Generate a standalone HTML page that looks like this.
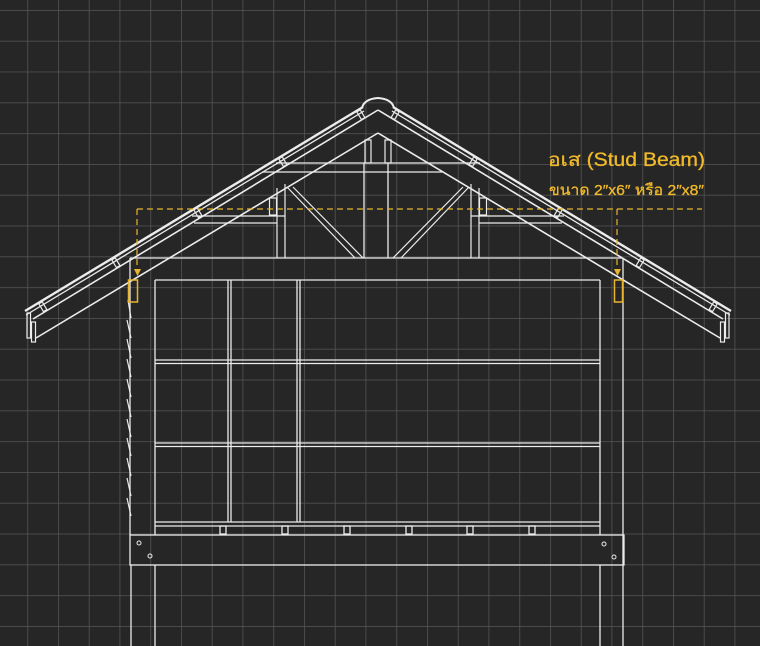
<!DOCTYPE html>
<html><head><meta charset="utf-8"><style>
html,body{margin:0;padding:0;background:#262626;}
svg{display:block}
</style></head><body>
<svg width="760" height="646" viewBox="0 0 760 646" xmlns="http://www.w3.org/2000/svg">
<defs>
<pattern id="g" x="27.3" y="10" width="30.75" height="30.8" patternUnits="userSpaceOnUse">
<path d="M0 0V30.8M0 0H30.75" stroke="#565656" stroke-width="1.5" fill="none"/>
</pattern>
<g id="half" fill="none" stroke="#ececec">
<path d="M25 311 L363 107" stroke-width="2.4"/>
<path d="M26 315 L364 111" stroke-width="1.3"/>
<path d="M33 319 L378 110" stroke-width="1.6"/>
<path d="M36 338 L378 133" stroke-width="1.6"/>
<rect x="27" y="313" width="3.5" height="25" stroke-width="1.2"/>
<rect x="31.5" y="322" width="4" height="20" stroke-width="1.2"/>
<g stroke-width="1.2">
<rect x="-2" y="1" width="4" height="9" transform="translate(40,302) rotate(-31)"/>
<rect x="-2" y="1" width="4" height="9" transform="translate(113,258) rotate(-31)"/>
<rect x="-2" y="1" width="4" height="9" transform="translate(195,208) rotate(-31)"/>
<rect x="-2" y="1" width="4" height="9" transform="translate(280,157) rotate(-31)"/>
<rect x="-2" y="1" width="4" height="9" transform="translate(358,110) rotate(-31)"/>
</g>
<g stroke-width="1.2">
<path d="M277 188V258M285 184V258"/>
<rect x="269.5" y="198" width="7" height="17"/>
<path d="M192 216H285M194 223H277"/>
<path d="M287 187L355 258M293 187L363 258"/>
<rect x="365" y="140" width="6" height="23"/>
</g>
</g>
</defs>
<rect width="760" height="646" fill="#262626"/>
<rect width="760" height="646" fill="url(#g)"/>

<use href="#half"/>
<use href="#half" transform="translate(756,0) scale(-1,1)"/>

<g fill="none" stroke="#ececec" stroke-width="1.3">
<path d="M362 108 Q364 99 378 98 Q392 99 394 108" stroke-width="2"/>
<path d="M276 163H480M262 172H442"/>
<path d="M364 163V258M388 163V258"/>
<path d="M130 258H623"/>
<path d="M155 280H600"/>
<path d="M130 258V535M155 280V535M600 280V535M623 258V646"/>
<path d="M131 565V646M155 565V646M600 565V646"/>
<path d="M128 300L131 318M127 320L131 338M127 339L131 358M127 359L131 377M127 379L131 397M127 399L131 417M127 419L131 437M127 438L131 456M127 458L131 476M127 478L131 496M127 498L131 516" stroke-width="1.2"/>
<path d="M228 280V522M231 280V522M297 280V522M300 280V522"/>
<path d="M155 360H600M155 363.5H600M155 443H600M155 446.5H600M155 522H600M155 526H600"/>
<rect x="220" y="526" width="6" height="8"/><rect x="282" y="526" width="6" height="8"/><rect x="344" y="526" width="6" height="8"/><rect x="406" y="526" width="6" height="8"/><rect x="467" y="526" width="6" height="8"/><rect x="529" y="526" width="6" height="8"/>
<rect x="130" y="535" width="494" height="30"/>
<circle cx="139" cy="543" r="2" stroke-width="1"/><circle cx="150" cy="556" r="2" stroke-width="1"/>
<circle cx="604" cy="544" r="2" stroke-width="1"/><circle cx="614" cy="557" r="2" stroke-width="1"/>
</g>

<g stroke="#e9b52e" fill="none" stroke-width="1.2">
<path d="M137 209H702" stroke-dasharray="6 4"/>
<path d="M137 209V270M617 209V270" stroke-dasharray="6 4"/>
<rect x="128.5" y="280" width="9" height="22" stroke-width="1.5"/>
<rect x="614.5" y="280" width="8" height="22" stroke-width="1.5"/>
</g>
<path d="M134 269H141L137.5 276Z M614 269H621L617.5 276Z" fill="#e9b52e"/>
<g fill="#f0b929" stroke="#f0b929" stroke-width="0.3" font-family="'Liberation Sans','DejaVu Sans',sans-serif">
<text x="548" y="166" font-size="19" textLength="157" lengthAdjust="spacingAndGlyphs">อเส (Stud Beam)</text>
<text x="549" y="195" font-size="15" textLength="155" lengthAdjust="spacingAndGlyphs">ขนาด 2″x6″ หรือ 2″x8″</text>
</g>
</svg>
</body></html>
